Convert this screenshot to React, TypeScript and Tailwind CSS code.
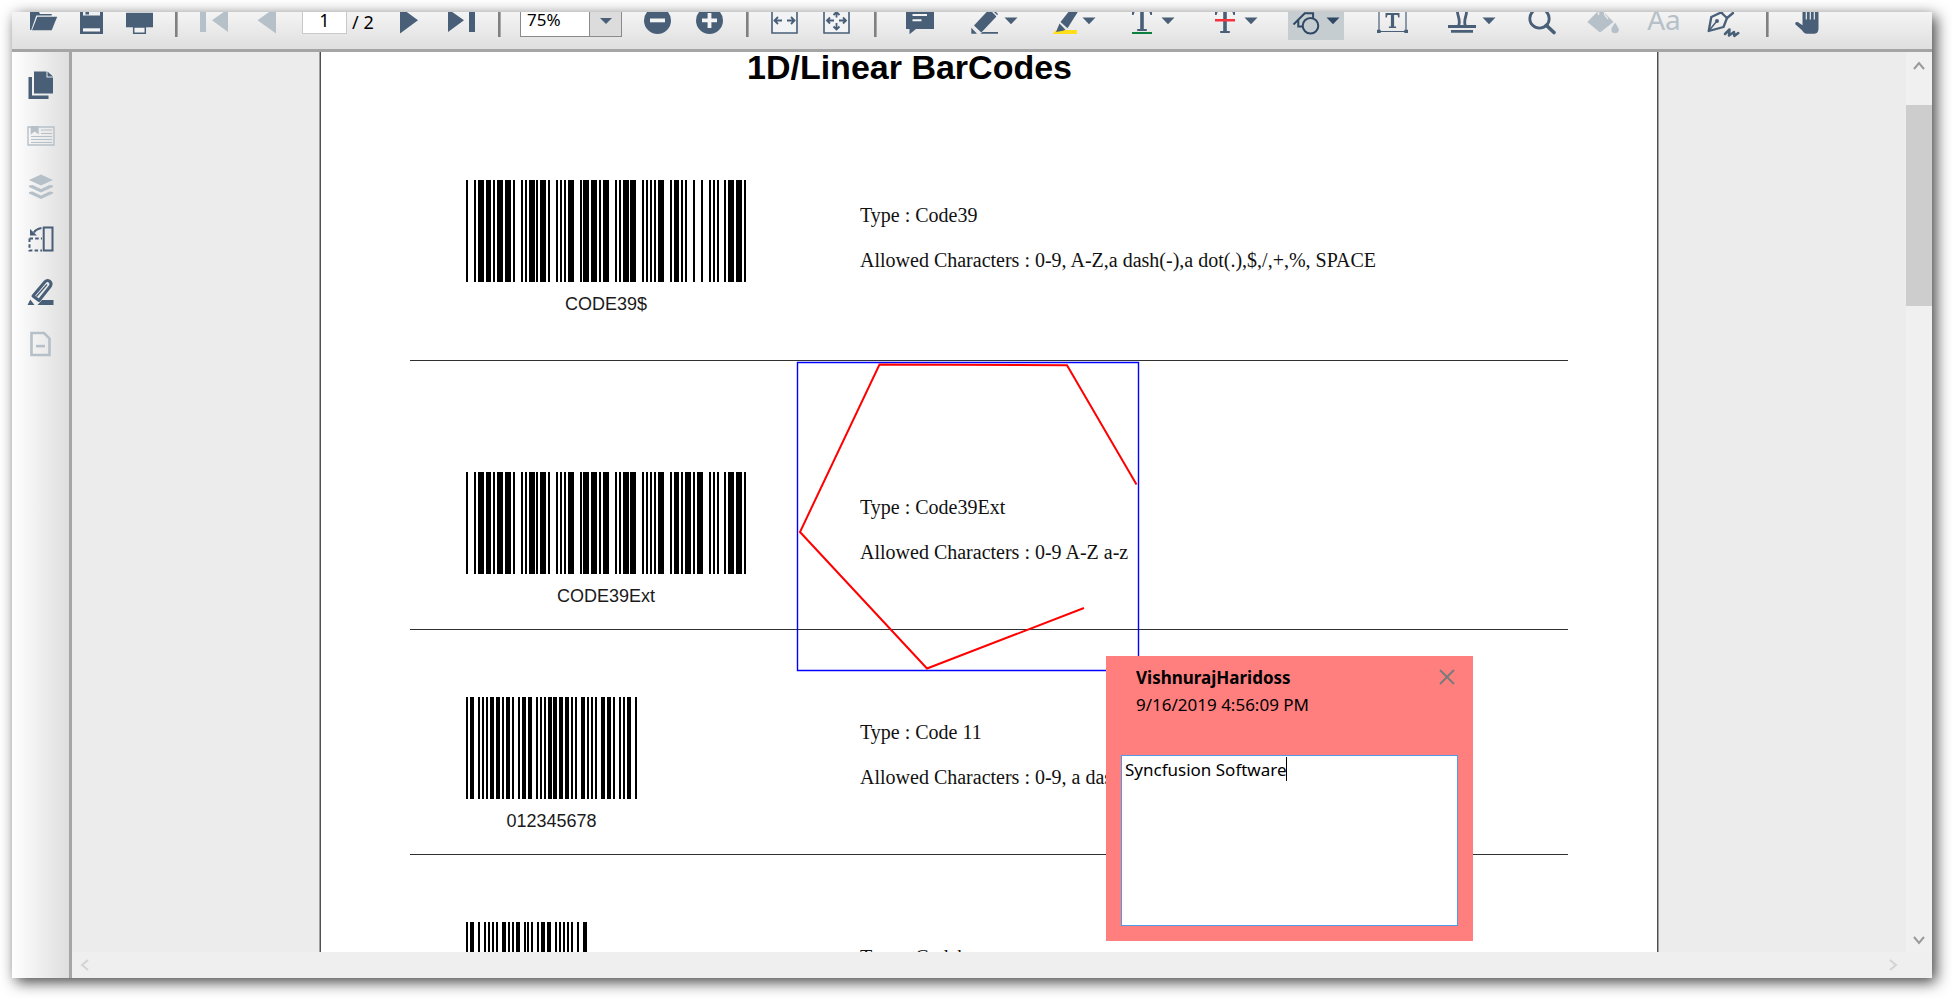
import React from "react";

const INK = "#495f78";
const MUTED = "#b6c0c8";

const DIGIT_BARS: Record<string, string> = {
  "1": "WnnnW", "2": "nWnnW", "3": "WWnnn", "4": "nnWnW", "5": "WnWnn",
  "6": "nWWnn", "7": "nnnWW", "8": "WnnWn", "9": "nWnWn", "0": "nnWWn",
};

function code39Parts(ch: string): [string, string] {
  if (ch === "*") return ["nnWWn", "Wnnn"];
  if (ch === "$") return ["nnnnn", "WWWn"];
  if (DIGIT_BARS[ch]) return [DIGIT_BARS[ch], "nWnn"];
  const n = ch.charCodeAt(0) - 65;
  const spaces = n < 10 ? "nnWn" : n < 20 ? "nnnW" : "Wnnn";
  return [DIGIT_BARS[String((n + 1) % 10)], spaces];
}

function code39(text: string): string {
  return ("*" + text + "*")
    .split("")
    .map((ch) => {
      const [bars, spaces] = code39Parts(ch);
      let out = "";
      for (let i = 0; i < 5; i++) {
        out += bars[i] === "W" ? "111" : "1";
        if (i < 4) out += spaces[i] === "W" ? "000" : "0";
      }
      return out;
    })
    .join("0");
}

const CODE11 = [
  "1011001", "101011", "1101011", "1001011", "1100101", "1011011",
  "1101101", "1001101", "1010011", "1101001", "1011001",
].join("0");

const CODABAR = [
  "1011001001", "101010011", "101011001", "101001011", "110010101", "1010010011",
].join("0");

function Barcode({ bits, width, label }: { bits: string; width: number; label: string }) {
  const runs = Array.from(bits.matchAll(/1+/g));
  return (
    <svg
      role="img"
      aria-label={label}
      width={width}
      height={102}
      viewBox={`0 0 ${bits.length} 102`}
      preserveAspectRatio="none"
      shapeRendering="crispEdges"
      className="block"
    >
      {runs.map((r) => (
        <rect key={r.index} x={r.index} y={0} width={r[0].length} height={102} fill="#000" />
      ))}
    </svg>
  );
}

function Icon({ w = 28, children, color = INK }: { w?: number; children: React.ReactNode; color?: string }) {
  return (
    <svg width={w} height={28} viewBox={`0 0 ${w} 28`} fill={color} className="block shrink-0 overflow-visible" aria-hidden="true">
      {children}
    </svg>
  );
}

function Arrow({ color = INK }: { color?: string }) {
  return (
    <svg width={14} height={28} viewBox="0 0 14 28" className="block shrink-0" aria-hidden="true">
      <path d="M0.5 11.5h13L7 18.3z" fill={color} />
    </svg>
  );
}

function Tool({ label, className, children, disabled }: { label: string; className: string; children: React.ReactNode; disabled?: boolean }) {
  return (
    <button
      type="button"
      aria-label={label}
      disabled={disabled}
      className={`flex h-10 shrink-0 items-end justify-center pb-[6px] ${className}`}
    >
      {children}
    </button>
  );
}

function Separator() {
  return (
    <div className="mb-[3px] flex h-8 w-6 shrink-0 justify-center">
      <div className="w-[3px] border-r border-[#a8a8a8] bg-[#808080]" />
    </div>
  );
}

function Toolbar() {
  return (
    <div
      role="toolbar"
      aria-label="Document tools"
      className="flex h-10 shrink-0 items-end overflow-hidden border-b-[3px] border-[#a5a5a5] bg-linear-to-b from-[#f4f4f4] to-[#dfdfdf] pb-[9px] pl-2"
    >
      <Tool label="Open" className="w-12">
        <Icon>
          <path d="M0 24V4h8l2 4h11.7v1.5H6.300L1.200 24z" />
          <path d="M7.300 10.700H27.200L21.700 24.300H2z" />
        </Icon>
      </Tool>
      <Tool label="Save" className="w-12">
        <Icon w={24}>
          <path d="M0 3h23v25H0z" />
          <path d="M3 3h17v6.500H3z" fill="#eef0f2" />
          <path d="M5.500 3H9v5.500H5.500z" />
          <path d="M3 22.300h17v3.200H3z" fill="#f4f4f4" />
        </Icon>
      </Tool>
      <Tool label="Print" className="w-12">
        <Icon>
          <path d="M0 6.800h27V21.300H0z" />
          <path d="M7 3h13v3H7z" />
          <path d="M7.700 21h11.600v6.200H7.700z" fill="#f2f2f2" stroke={INK} strokeWidth="1.5" />
        </Icon>
      </Tool>
      <Separator />
      <Tool label="First page" className="w-13" disabled>
        <Icon color={MUTED}>
          <path d="M0 2h6v24H0zM28 3v23L12 14.300z" />
        </Icon>
      </Tool>
      <Tool label="Previous page" className="w-13" disabled>
        <Icon w={19} color={MUTED}>
          <path d="M19 1v26.500L0.500 14.300z" />
        </Icon>
      </Tool>
      <input
        aria-label="Page number"
        defaultValue="1"
        className="mb-[6px] ml-[10px] h-7 w-[45px] shrink-0 border border-[#c9c9c9] bg-white text-center text-lg text-black outline-none"
      />
      <span className="mb-[6px] w-9 shrink-0 pl-[5px] text-lg leading-6 text-black">/ 2</span>
      <Tool label="Next page" className="w-13">
        <Icon w={18}>
          <path d="M0 1v26.500L18 14.300z" />
        </Icon>
      </Tool>
      <Tool label="Last page" className="w-13">
        <Icon>
          <path d="M1 3v23L17 14.300zM22 2h6v24h-6z" />
        </Icon>
      </Tool>
      <Separator />
      <div className="mb-[3px] ml-[9px] grid h-8 w-[102px] shrink-0 border border-[#8a8a8a] bg-white">
        <select
          aria-label="Zoom"
          defaultValue="75%"
          className="col-start-1 row-start-1 w-full appearance-none bg-transparent pb-[2px] pl-[6px] text-[17px] leading-6 text-black outline-none"
        >
          <option>50%</option>
          <option>75%</option>
          <option>100%</option>
        </select>
        <div className="pointer-events-none col-start-1 row-start-1 flex h-full w-8 items-center justify-center justify-self-end border-l border-[#8a8a8a] bg-[#dcdcdc]">
          <svg width={12} height={6} viewBox="0 0 12 6" aria-hidden="true">
            <path d="M0 0h12L6 6z" fill={INK} />
          </svg>
        </div>
      </div>
      <Tool label="Zoom out" className="ml-[9px] w-13">
        <Icon w={27}>
          <circle cx="13.5" cy="14.5" r="13.5" />
          <path d="M6 12.500h15v3.800H6z" fill="#f4f4f4" />
        </Icon>
      </Tool>
      <Tool label="Zoom in" className="w-13">
        <Icon w={27}>
          <circle cx="13.5" cy="14.5" r="13.5" />
          <path d="M6 12.500h5.600V7h3.800v5.500H21v3.800h-5.600V22h-3.800v-5.700H6z" fill="#f4f4f4" />
        </Icon>
      </Tool>
      <Separator />
      <Tool label="Fit width" className="w-13">
        <Icon w={28}>
          <path d="M1 2h25v25H1z" fill="#f1f3f5" stroke={INK} strokeWidth="1.6" />
          <path d="M3.500 14.500H11M7 11l-3.500 3.500L7 18M16 14.500h7.500M20 11l3.500 3.500L20 18" fill="none" stroke={INK} strokeWidth="1.8" />
        </Icon>
      </Tool>
      <Tool label="Fit page" className="w-13">
        <Icon w={28}>
          <path d="M1 2h25v25H1z" fill="#f1f3f5" stroke={INK} strokeWidth="1.6" />
          <path
            d="M4 14.500h7M7 11.500l-3 3 3 3M16 14.500h7M20 11.500l3 3-3 3M13.500 5.500v6M10.500 9l3-3 3 3M13.500 17v7M10.500 20.500l3 3 3-3"
            fill="none"
            stroke={INK}
            strokeWidth="1.8"
          />
        </Icon>
      </Tool>
      <Separator />
      <Tool label="Sticky note" className="w-[66px]">
        <Icon>
          <path d="M0 3h28v20H10l-6.500 5.300V23H0z" />
          <path d="M6.500 8H21v2H6.500zM6.500 13.300h9v2h-9z" fill="#f4f4f4" />
        </Icon>
      </Tool>
      <Tool label="Ink" className="w-[82px] gap-[5px]">
        <Icon>
          <path d="M3 19.500L17.500 4h5.500l4 4-2.500 3.500L10.300 26.500z" />
          <path d="M20.500 4.500l6 6" stroke="#f0f0f0" strokeWidth="1.4" />
          <path d="M0.300 21.800L6 27.800H0.300zM11.500 26H27v1.800H9.500z" />
        </Icon>
        <Arrow />
      </Tool>
      <Tool label="Highlight" className="w-[78px] gap-[2px]">
        <Icon>
          <path d="M8.500 16L18 4h9L15.500 22.300z" />
          <path d="M4 24h21v4H0.700z" fill="#ffdf1b" />
          <path d="M7.500 17.500l6 6.200-2.500 1-7 1.300z" />
        </Icon>
        <Arrow />
      </Tool>
      <Tool label="Underline" className="w-20 gap-[9px]">
        <Icon w={20}>
          <path d="M0 3h20v6h-1.600l-1-3.200h-5.600V23h3v2H5.200v-2h3V5.800H2.600l-1 3.200H0z" />
          <path d="M0 26h20v2H0z" fill="#0c8040" />
        </Icon>
        <Arrow />
      </Tool>
      <Tool label="Strikethrough" className="w-[86px] gap-[9px]">
        <Icon w={20}>
          <path d="M0 3h20v6h-1.600l-1-3.200h-5.600V25h3v2H5.200v-2h3V5.800H2.600l-1 3.200H0z" />
          <path d="M0 13h20v2.500H0z" fill="#f5333f" />
        </Icon>
        <Arrow />
      </Tool>
      <div className="flex w-[74px] shrink-0 justify-center">
        <Tool label="Shapes" className="w-14 gap-[6px] bg-[#c6cdd1]">
          <Icon color="#2f4964">
            <g fill="none" stroke="#2f4964" strokeWidth="2">
              <circle cx="18.5" cy="19.7" r="7.8" />
              <path d="M1.500 18.500L12.800 7.300h8.300V12M6.300 14v6.500h4.200" />
            </g>
          </Icon>
          <Arrow color="#2f4964" />
        </Tool>
      </div>
      <Tool label="Text box" className="w-[78px]">
        <Icon w={31}>
          <path d="M2 3h27v22.500H2z" fill="none" stroke={INK} strokeWidth="1.2" />
          <path d="M0 23.700h3.700v3.400H0zM27.300 23.700H31v3.400h-3.700z" />
          <path d="M8.500 7h14v4.500h-1.300l-.7-2.500h-3.400v11.500h2v1.500h-7.200v-1.500h2V9h-3.400l-.7 2.500H8.500z" />
        </Icon>
      </Tool>
      <Tool label="Stamp" className="w-[82px] gap-[6px]">
        <Icon>
          <path d="M10.500 20C13 15 9.500 9 9.500 6.500a4.500 4.500 0 0 1 9 0C18.500 10 15 15 17.500 20" fill="none" stroke={INK} strokeWidth="2.8" />
          <path d="M0 19h28v3H0zM3 24h22v2.700H3z" />
        </Icon>
        <Arrow />
      </Tool>
      <Tool label="Search" className="w-[58px]">
        <Icon>
          <circle cx="11.5" cy="12.5" r="9.700" fill="none" stroke={INK} strokeWidth="2.8" />
          <path d="M18.500 19.500l7.500 7" stroke={INK} strokeWidth="3.6" strokeLinecap="round" />
        </Icon>
      </Tool>
      <Tool label="Fill colour" className="w-16" disabled>
        <Icon w={32} color={MUTED}>
          <path d="M0.300 16L11 5l3-2 12.500 13L13 26.500z" />
          <path d="M11.500 4v5M18 4c-2 6 1 5 3 9" stroke="#eaeaea" strokeWidth="1.6" fill="none" />
          <path d="M28 16.500c2 3.500 3.800 5.200 3.800 7a3.700 3.700 0 0 1-7.500 0c0-1.800 1.800-3.500 3.700-7z" />
        </Icon>
      </Tool>
      <button type="button" disabled className="mb-[3px] flex h-9 w-[58px] shrink-0 items-center justify-center text-[28px] leading-9 text-[#b6c0c8]">
        Aa
      </button>
      <Tool label="Signature" className="w-[62px]">
        <Icon w={34}>
          <g fill="none" stroke={INK} strokeWidth="2.3" strokeLinejoin="round" strokeLinecap="round">
            <path d="M1.700 25L4.300 11 14 6.500l6 5.500L16.500 21z" />
            <path d="M14 6.500L19 3M20 12l6-5" />
            <path d="M2.500 24l7-8.500" strokeWidth="1.5" />
            <path d="M18 28l4.500-4.500-.5 6 5-3.500.3 4 4-3" strokeWidth="2.5" />
          </g>
          <circle cx="10" cy="15" r="2" />
        </Icon>
      </Tool>
      <Separator />
      <Tool label="Hand" className="w-14">
        <Icon w={24}>
          <path d="M7.500 3h16v19c0 4-1.500 5.700-4 5.700h-7.500c-2.500 0-3.500-1.500-5-3.500L0.500 18.500c-1-2 1-3.300 2.600-2.200l4.400 3z" />
          <path d="M11.300 3v10.500M15.300 3v10.500M19.300 3v10.500" stroke="#eeeeee" strokeWidth="1.2" />
        </Icon>
      </Tool>
    </div>
  );
}

function SideButton({ label, children, disabled }: { label: string; children: React.ReactNode; disabled?: boolean }) {
  return (
    <button type="button" aria-label={label} disabled={disabled} className="flex h-13 w-full shrink-0 items-center justify-center">
      {children}
    </button>
  );
}

function Sidebar() {
  return (
    <nav aria-label="Panels" className="flex w-15 shrink-0 flex-col border-r-[3px] border-[#a5a5a5] bg-linear-to-r from-white to-[#dedede] pt-[6px]">
      <SideButton label="Thumbnails">
        <Icon w={26}>
          <path d="M0.500 7H4v18.500h16.500V29H0.500z" />
          <path d="M6 1.500h12.500v6H25V23.500H6z" />
          <path d="M19.500 1.500L25 6.500h-5.500z" />
        </Icon>
      </SideButton>
      <SideButton label="Bookmarks" disabled>
        <Icon w={28} color={MUTED}>
          <path d="M1 5h26v18H1z" fill="none" stroke={MUTED} strokeWidth="1.4" />
          <path d="M3.700 4h8v8.500l-4-3-4 3z" />
          <path d="M14 8h11M14 11.500h11M4 14.500h21M4 17.500h21M4 20.500h21" stroke={MUTED} strokeWidth="1.2" />
        </Icon>
      </SideButton>
      <SideButton label="Layers" disabled>
        <Icon w={26} color={MUTED}>
          <path d="M13 0.500l12 5.500-12 5.500L1 6z" />
          <path d="M1 11.500l3.500-.5L13 15l8.500-4 3.500.5V13l-12 5.500L1 13zM1 18l3.500-.5L13 21.500l8.500-4 3.500.5v1.500L13 25 1 19.500z" />
        </Icon>
      </SideButton>
      <SideButton label="Organize pages">
        <Icon w={26}>
          <path d="M15.700 1.500h8.800v23h-8.800z" fill="none" stroke={INK} strokeWidth="2" />
          <path d="M1.500 12.500v12H14M1.500 12.500H14" fill="none" stroke={INK} strokeWidth="2" strokeDasharray="3.5 2.2" />
          <path d="M13.500 2C9 3 7 4.500 6 6.500" fill="none" stroke={INK} strokeWidth="2" />
          <path d="M2 3v6.500h7z" />
        </Icon>
      </SideButton>
      <SideButton label="Annotations">
        <Icon w={27}>
          <path d="M6 18L18 3.700c3-3 7.500.5 5.500 4.300L12 22.500z" fill="none" stroke={INK} strokeWidth="3" strokeLinejoin="round" />
          <path d="M9.500 18.500L20 6.500" stroke={INK} strokeWidth="1.4" />
          <path d="M3.300 21.500L7.500 27H0.500zM15 22h11.500v5H10.500z" />
        </Icon>
      </SideButton>
      <SideButton label="Redaction" disabled>
        <Icon w={21} color={MUTED}>
          <path d="M1.500 3H14l5.500 5.500V25h-18z" fill="none" stroke={MUTED} strokeWidth="2.6" />
          <path d="M6 14.800h9v2.600H6z" />
        </Icon>
      </SideButton>
    </nav>
  );
}

function Entry({ bits, width, code, type, allowed, className }: { bits: string; width: number; code: string; type: string; allowed: string; className: string }) {
  return (
    <section className={`flex border-b border-[#303030] pl-14 ${className}`}>
      <div className="w-[394px] shrink-0">
        <figure className="flex w-fit flex-col items-center gap-[10px]">
          <Barcode bits={bits} width={width} label={code} />
          <figcaption className="font-['Liberation_Sans',Arial,sans-serif] text-lg leading-6 text-[#1a1a1a]">{code}</figcaption>
        </figure>
      </div>
      <div className="flex flex-col gap-5 pt-[23px] font-['Liberation_Serif','Times_New_Roman',serif] text-xl leading-[25px] whitespace-nowrap text-[#111]">
        <p>Type : {type}</p>
        <p>Allowed Characters : {allowed}</p>
      </div>
    </section>
  );
}

function Note() {
  return (
    <aside
      aria-label="Comment"
      className="absolute top-[609px] left-[785px] flex h-[285px] w-[367px] flex-col bg-[#ff7f7f] px-[15px] pt-2 pb-[15px]"
    >
      <div className="flex items-start justify-between pr-[3px] pl-[15px]">
        <div className="text-[17px] leading-[27px] text-black">
          <h2 className="font-bold">VishnurajHaridoss</h2>
          <p>9/16/2019 4:56:09 PM</p>
        </div>
        <button type="button" aria-label="Close comment" className="pt-[5px]">
          <svg width={16} height={16} viewBox="0 0 16 16" className="block" aria-hidden="true">
            <path d="M1 1l14 14M15 1L1 15" stroke="#7b7b7b" strokeWidth="2" />
          </svg>
        </button>
      </div>
      <div className="relative mt-[37px] flex flex-1">
        <textarea
          aria-label="Comment text"
          defaultValue="Syncfusion Software"
          className="w-full resize-none border border-[#4f9be8] bg-white px-[3px] pt-px text-[17px] leading-[26px] text-black outline-none"
        />
        <div className="absolute top-[2px] left-[165px] h-6 w-px bg-black" />
      </div>
    </aside>
  );
}

function Chevron({ d, w, h, color }: { d: string; w: number; h: number; color: string }) {
  return (
    <svg width={w} height={h} viewBox={`0 0 ${w} ${h}`} className="block" aria-hidden="true">
      <path d={d} fill="none" stroke={color} strokeWidth="2" />
    </svg>
  );
}

export default function App() {
  return (
    <div className="h-screen w-full overflow-hidden bg-white pt-3 pr-5 pb-5 pl-3 font-['Noto_Sans',sans-serif]">
      <div className="flex h-full flex-col shadow-[4px_4px_14px_rgba(0,0,0,0.75)]">
        <Toolbar />
        <div className="flex min-h-0 flex-1">
          <Sidebar />
          <div className="flex min-w-0 flex-1 flex-col">
            <div className="flex min-h-0 flex-1">
              <main className="min-w-0 flex-1 overflow-hidden bg-[#ececec]">
                <article className="relative mx-auto -mt-[5px] min-h-[1200px] w-[1338px] border-x border-[#505050] bg-white px-[89px] shadow-[0_0_0_1px_#a0a0a0]">
                  <h1 className="pl-[337px] font-['Liberation_Sans',Arial,sans-serif] text-[34px] leading-10 font-bold text-black">
                    1D/Linear BarCodes
                  </h1>
                  <Entry className="pt-[93px] pb-11" bits={code39("CODE39$")} width={280} code="CODE39$" type="Code39" allowed="0-9, A-Z,a dash(-),a dot(.),$,/,+,%, SPACE" />
                  <Entry className="pt-[111px] pb-[21px]" bits={code39("CODE39E")} width={280} code="CODE39Ext" type="Code39Ext" allowed="0-9 A-Z a-z" />
                  <Entry className="pt-[67px] pb-[21px]" bits={CODE11} width={171} code="012345678" type="Code 11" allowed="0-9, a dash(-)" />
                  <Entry className="pt-[67px] pb-[21px]" bits={CODABAR} width={121} code="0123" type="Codabar" allowed="0-9, a dash(-)" />
                  <svg width={344} height={312} viewBox="0 0 344 312" className="absolute top-[314px] left-[475px]" aria-label="Polygon annotation">
                    <path d="M1.500 1.500h341v308h-341z" fill="none" stroke="#0000ff" strokeWidth="1.4" />
                    <path d="M340.500 123.500L271 4.300 83.500 3.500 4 171l127 136.500L288 247" fill="none" stroke="#ff0000" strokeWidth="2" />
                  </svg>
                  <Note />
                </article>
              </main>
              <div className="flex w-[26px] shrink-0 flex-col items-center bg-[#f0f0f0]">
                <button type="button" aria-label="Scroll up" className="flex h-[53px] w-full justify-center pt-[9px]">
                  <Chevron d="M1 8l5-6 5 6" w={12} h={10} color="#9a9a9a" />
                </button>
                <div className="h-[201px] w-full bg-[#cdcdcd]" />
                <button type="button" aria-label="Scroll down" className="mt-auto flex w-full justify-center pb-[7px]">
                  <Chevron d="M1 2l5 6 5-6" w={12} h={10} color="#9a9a9a" />
                </button>
              </div>
            </div>
            <div className="flex h-[26px] shrink-0 items-center justify-between bg-[#efefef] pr-[34px] pl-2">
              <button type="button" aria-label="Scroll left">
                <Chevron d="M8 1L2 6l6 5" w={10} h={12} color="#d3d3d3" />
              </button>
              <button type="button" aria-label="Scroll right">
                <Chevron d="M2 1l6 5-6 5" w={10} h={12} color="#d3d3d3" />
              </button>
            </div>
          </div>
        </div>
      </div>
    </div>
  );
}
